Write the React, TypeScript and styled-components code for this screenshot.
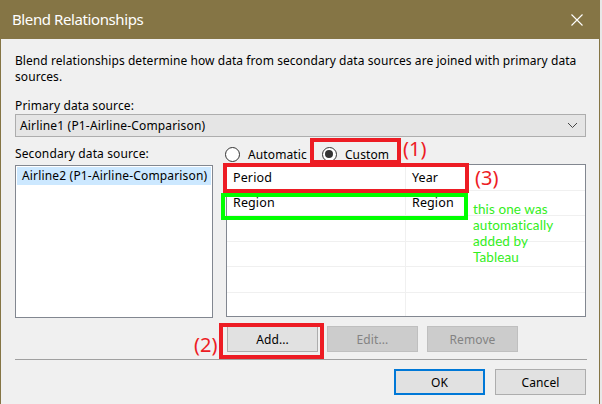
import React from "react";
import styled, { createGlobalStyle } from "styled-components";

const Global = createGlobalStyle`
  html, body { margin: 0; padding: 0; background: #e8e8e8; }
  body { font-family: "Noto Sans", "Open Sans", sans-serif; }
  * { box-sizing: border-box; }
`;

const Window = styled.div`
  position: relative;
  width: 600px;
  height: 404px;
  background: #f0f0f0;
  border-left: 1px solid #857545;
  border-right: 1px solid #857545;
  display: flex;
  flex-direction: column;
  overflow: hidden;
  font-size: 12px;
  letter-spacing: 0.12px;
  color: #000;
`;

const TitleBar = styled.div`
  height: 39px;
  flex: none;
  background: #857545;
  display: flex;
  align-items: center;
  justify-content: space-between;
  padding: 0 16px 0 11px;
`;

const Title = styled.div`
  color: #fff;
  font-size: 15px;
  letter-spacing: -0.4px;
  margin-top: -1px;
`;

const Body = styled.div`
  flex: 1;
  display: flex;
  flex-direction: column;
  padding: 14px 13px 0 14px;
`;

const Description = styled.p`
  margin: 0;
  line-height: 16px;
  letter-spacing: 0.07px;
  width: 572px;
`;

const Label = styled.div`
  line-height: 16px;
`;

const PrimaryLabel = styled(Label)`
  margin-top: 13px;
`;

const Combo = styled.div`
  height: 23px;
  border: 1px solid #adadad;
  background: #e5e5e5;
  display: flex;
  align-items: center;
  justify-content: space-between;
  padding: 0 7px 0 4px;
  letter-spacing: 0.17px;
`;

const Middle = styled.div`
  display: grid;
  grid-template-columns: 198px 1fr;
  column-gap: 13px;
  margin-top: 9px;
`;

const LeftCol = styled.div`
  display: flex;
  flex-direction: column;
`;

const RightCol = styled.div`
  display: flex;
  flex-direction: column;
`;

const ListBox = styled.div`
  margin-top: 3px;
  height: 153px;
  background: #fff;
  border: 1px solid #828790;
  padding: 1px;
`;

const ListItem = styled.div<{ $selected?: boolean }>`
  height: 18px;
  line-height: 18px;
  padding-left: 5px;
  background: ${(p) => (p.$selected ? "#cce8ff" : "transparent")};
  letter-spacing: 0.17px;
  white-space: nowrap;
`;

const RadioRow = styled.div`
  display: flex;
  align-items: center;
  height: 20px;
  margin-top: -2px;
  margin-left: -1px;
  gap: 15px;
`;

const RadioOption = styled.label`
  display: flex;
  align-items: center;
  gap: 8px;
`;

const RadioCircle = styled.span<{ $checked?: boolean }>`
  width: 15px;
  height: 15px;
  border-radius: 50%;
  border: 1px solid #333;
  background: #fff;
  display: flex;
  align-items: center;
  justify-content: center;
  &::after {
    content: "";
    width: 8px;
    height: 8px;
    border-radius: 50%;
    background: ${(p) => (p.$checked ? "#333" : "transparent")};
  }
`;

const Grid = styled.div`
  height: 153px;
  background: #fff;
  border: 1px solid #828790;
  overflow: hidden;
`;

const GridRow = styled.div`
  display: grid;
  grid-template-columns: 179px 1fr;
  height: 25.6px;
  border-bottom: 1px solid #f0f0f0;
`;

const GridCell = styled.div<{ $first?: boolean }>`
  display: flex;
  align-items: center;
  padding-left: 6px;
  border-right: ${(p) => (p.$first ? "1px solid #f0f0f0" : "none")};
  font-size: 12.5px;
`;

const ButtonRow = styled.div`
  display: flex;
  gap: 9px;
  margin-top: 8px;
  padding-left: 212px;
`;

const Button = styled.button<{ $disabled?: boolean; $default?: boolean }>`
  width: 91px;
  height: 26px;
  font-family: inherit;
  font-size: 12px;
  letter-spacing: 0.1px;
  padding: 0;
  background: ${(p) => (p.$disabled ? "#cccccc" : "#e1e1e1")};
  color: ${(p) => (p.$disabled ? "#838383" : "#000")};
  border: ${(p) =>
    p.$default ? "2px solid #0078d7" : p.$disabled ? "1px solid #bfbfbf" : "1px solid #adadad"};
`;

const Separator = styled.div`
  margin-top: 7px;
  height: 1px;
  background: #a0a0a0;
  margin-right: -1px;
`;

const Footer = styled.div`
  display: flex;
  justify-content: flex-end;
  gap: 10px;
  margin-top: 9px;
`;

const Note = styled.div<{ $x: number; $y: number; $w: number; $h: number; $color: string }>`
  position: absolute;
  left: ${(p) => p.$x}px;
  top: ${(p) => p.$y}px;
  width: ${(p) => p.$w}px;
  height: ${(p) => p.$h}px;
  border: 4px solid ${(p) => p.$color};
  pointer-events: none;
`;

const Tag = styled.div<{ $x: number; $y: number }>`
  position: absolute;
  left: ${(p) => p.$x}px;
  top: ${(p) => p.$y}px;
  color: #ed1c24;
  font-size: 20px;
  line-height: 20px;
  letter-spacing: 0;
`;

const GreenText = styled.div`
  position: absolute;
  left: 472px;
  top: 201px;
  color: #33ee22;
  font-family: Lato, "Noto Sans", sans-serif;
  font-size: 13.5px;
  line-height: 16px;
  letter-spacing: 0.1px;
`;

const Chevron = () => (
  <svg width="11" height="7" viewBox="0 0 11 7">
    <path d="M1 1 L5.5 5.5 L10 1" stroke="#444" strokeWidth="1" fill="none" />
  </svg>
);

const CloseIcon = () => (
  <svg width="12" height="12" viewBox="0 0 12 12">
    <path d="M0.5 0.5 L11.5 11.5 M11.5 0.5 L0.5 11.5" stroke="#fff" strokeWidth="1.1" />
  </svg>
);

export default function App() {
  const rows = [
    ["Period", "Year"],
    ["Region", "Region"],
    ["", ""],
    ["", ""],
    ["", ""],
    ["", ""],
  ];
  return (
    <>
      <Global />
      <Window>
        <TitleBar>
          <Title>Blend Relationships</Title>
          <CloseIcon />
        </TitleBar>
        <Body>
          <Description>
            Blend relationships determine how data from secondary data sources are joined with primary data
            sources.
          </Description>
          <PrimaryLabel>Primary data source:</PrimaryLabel>
          <Combo>
            <span>Airline1 (P1-Airline-Comparison)</span>
            <Chevron />
          </Combo>
          <Middle>
            <LeftCol>
              <Label>Secondary data source:</Label>
              <ListBox>
                <ListItem $selected>Airline2 (P1-Airline-Comparison)</ListItem>
              </ListBox>
            </LeftCol>
            <RightCol>
              <RadioRow>
                <RadioOption>
                  <RadioCircle />
                  Automatic
                </RadioOption>
                <RadioOption>
                  <RadioCircle $checked />
                  Custom
                </RadioOption>
              </RadioRow>
              <Grid>
                {rows.map((r, i) => (
                  <GridRow key={i}>
                    <GridCell $first>{r[0]}</GridCell>
                    <GridCell>{r[1]}</GridCell>
                  </GridRow>
                ))}
              </Grid>
            </RightCol>
          </Middle>
          <ButtonRow>
            <Button>Add...</Button>
            <Button $disabled>Edit...</Button>
            <Button $disabled>Remove</Button>
          </ButtonRow>
          <Separator />
          <Footer>
            <Button $default>OK</Button>
            <Button>Cancel</Button>
          </Footer>
        </Body>

        <Note $x={309} $y={138} $w={91} $h={26} $color="#ed1c24" />
        <Tag $x={402} $y={139}>(1)</Tag>
        <Note $x={222} $y={163} $w={246} $h={30} $color="#ed1c24" />
        <Tag $x={474} $y={168}>(3)</Tag>
        <Note $x={220} $y={193} $w={247} $h={27} $color="#00ff00" />
        <GreenText>
          this one was
          <br />
          automatically
          <br />
          added by
          <br />
          Tableau
        </GreenText>
        <Note $x={218} $y={323} $w={105} $h={36} $color="#ed1c24" />
        <Tag $x={193} $y={335}>(2)</Tag>
      </Window>
    </>
  );
}
